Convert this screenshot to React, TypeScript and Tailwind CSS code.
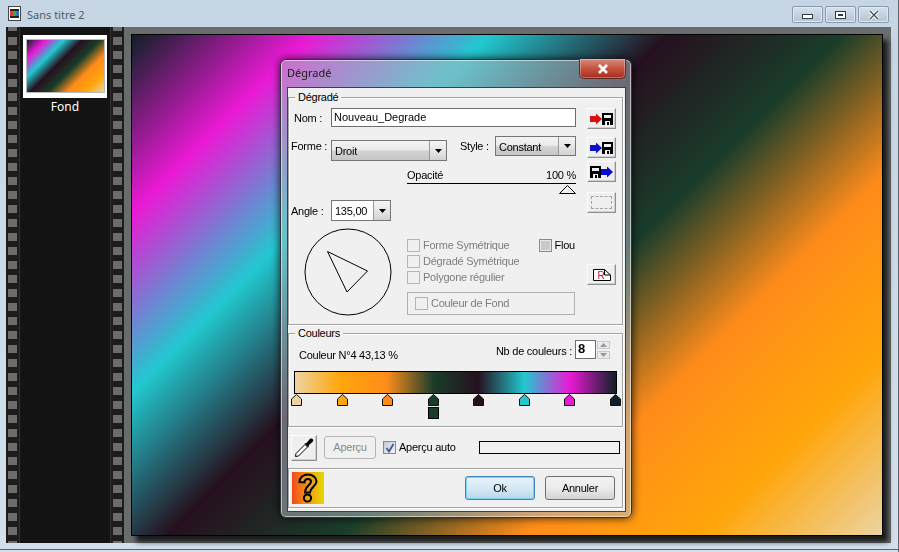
import React from "react";

const FONT = "font-['Liberation_Sans',Arial,sans-serif]";
const GRAD =
  "bg-[linear-gradient(135deg,#0f2026_0%,#ea19d5_14.29%,#22c8d0_28.57%,#26101f_42.87%,#1a3d2a_56.87%,#ff8c1a_71.43%,#ffa60a_85.71%,#ecd3a0_100%)]";
const BAR =
  "bg-[linear-gradient(90deg,#ecd3a0_0%,#ffa60a_14.29%,#ff8c1a_28.57%,#1a3d2a_43.13%,#26101f_57.13%,#22c8d0_71.43%,#ea19d5_85.71%,#0f2026_100%)]";

const RAISED =
  "border border-t-[#fdfdfd] border-l-[#fdfdfd] border-r-[#8f8f8f] border-b-[#8f8f8f] bg-[#efefef] shadow-[inset_-1px_-1px_0_#d0d0d0] flex items-center justify-center";

function Sprockets() {
  return (
    <div className="w-[13px] h-full overflow-hidden bg-[#1c1c1c] flex flex-col gap-[6px] pl-[2px]">
      {Array.from({ length: 38 }).map((_, i) => (
        <div key={i} className={`w-[9px] h-[8px] shrink-0 bg-[#6f6b6b] ${i === 0 ? "-mt-[4px]" : ""}`} />
      ))}
    </div>
  );
}

function WinBtn({ children, w }: { children: React.ReactNode; w: string }) {
  return (
    <div className={`${w} h-[17px] rounded-[2px] border border-[#8a9bac] bg-[linear-gradient(180deg,#d6e1ec_0%,#c5d3e0_50%,#b4c4d3_100%)] shadow-[inset_0_0_0_1px_#e0e8f0] flex items-center justify-center`}>
      {children}
    </div>
  );
}

function Floppy() {
  return (
    <>
      <rect x="0" y="0" width="11" height="12" fill="#000" />
      <rect x="2" y="2" width="7" height="3" fill="#f0f0f0" />
      <rect x="3" y="8" width="5" height="4" fill="#f0f0f0" />
      <rect x="5" y="9" width="2" height="3" fill="#000" />
    </>
  );
}

function Arrow({ color, dir }: { color: string; dir: "in" | "out" }) {
  return (
    <svg width="23" height="12" viewBox="0 0 23 12">
      {dir === "in" ? (
        <>
          <path d="M0 3H6V0.5L12 6L6 11.5V9H0Z" fill={color} />
          <g transform="translate(12 0)">
            <Floppy />
          </g>
        </>
      ) : (
        <>
          <Floppy />
          <path d="M11 3H17V0.5L23 6L17 11.5V9H11Z" fill={color} />
        </>
      )}
    </svg>
  );
}

function Select({ text, w, h = "h-[21px]", plain, cls = "" }: { text: string; w: string; h?: string; plain?: boolean; cls?: string }) {
  return (
    <div className={`${w} ${h} ${cls} border border-[#767676] flex ${plain ? "bg-white" : "bg-[linear-gradient(180deg,#f2f2f2_0%,#ebebeb_45%,#d2d2d2_55%,#c6c6c6_100%)]"}`}>
      <span className="flex-1 pl-[3px] leading-[20px] text-black whitespace-nowrap overflow-hidden">{text}</span>
      <div className="w-[17px] border-l border-[#9a9a9a] bg-[linear-gradient(180deg,#f4f4f4_0%,#e6e6e6_50%,#d2d2d2_100%)] flex items-center justify-center">
        <svg width="7" height="4" viewBox="0 0 7 4"><path d="M0 0H7L3.5 4Z" fill="#000" /></svg>
      </div>
    </div>
  );
}

function Check({ label, cls = "" }: { label?: string; cls?: string }) {
  return (
    <div className={`flex items-center h-[13px] ${cls}`}>
      <div className="w-[13px] h-[13px] border border-[#b5b5b5] bg-[#f0f0f0] shrink-0" />
      {label && <span className="ml-[3px] text-[#7d7d7d] whitespace-nowrap">{label}</span>}
    </div>
  );
}

function Marker({ color }: { color: string }) {
  return (
    <svg width="11" height="12" viewBox="0 0 11 12" className="block">
      <path d="M5.5 0.5L10.5 5V11.5H0.5V5Z" fill={color} stroke="#111" strokeWidth="1" />
    </svg>
  );
}

const GROUP = "border border-[#a3a3a3] shadow-[inset_1px_1px_0_#fff,1px_1px_0_#fff]";

export default function App() {
  const markers = ["#ecd3a0", "#ffa60a", "#ff8c1a", "#1a3d2a", "#26101f", "#22c8d0", "#ea19d5", "#0f2026"];
  return (
    <div className={`${FONT} relative w-[899px] h-[552px] overflow-hidden text-[11px] tracking-[-0.25px] flex flex-col bg-[linear-gradient(180deg,#c6d5e3_0%,#d3e0ec_100%)] border-r border-[#5a6470]`}>
      {/* title bar */}
      <div className="h-[27px] shrink-0 flex items-start pt-[6px] pl-[8px] pr-[9px]">
        <svg width="14" height="15" viewBox="0 0 14 15">
          <rect x="0.5" y="0.5" width="12" height="14" fill="#fff" stroke="#444" />
          <rect x="2" y="3" width="9" height="2" fill="#222" />
          <rect x="2" y="5" width="3" height="5" fill="#e23b2a" />
          <rect x="5" y="5" width="3" height="5" fill="#3aa84a" />
          <rect x="8" y="5" width="3" height="5" fill="#2f6fd0" />
          <rect x="2" y="10" width="9" height="2" fill="#222" />
        </svg>
        <span className="ml-[5px] font-['Noto_Sans',sans-serif] tracking-normal text-[11px] leading-[17px] text-[#505b66]">Sans titre 2</span>
        <div className="ml-auto flex gap-[2px]">
          <WinBtn w="w-[31px]">
            <div className="w-[11px] h-[5px] mt-[4px] border border-[#2d3a46] bg-white" />
          </WinBtn>
          <WinBtn w="w-[31px]">
            <div className="w-[11px] h-[8px] border border-[#2d3a46] bg-white flex items-center justify-center">
              <div className="w-[5px] h-[2px] border border-[#2d3a46]" />
            </div>
          </WinBtn>
          <WinBtn w="w-[31px]">
            <svg width="12" height="10" viewBox="0 0 12 10">
              <path d="M2 1L10 9M10 1L2 9" stroke="#fff" strokeWidth="3.4" />
              <path d="M2 1L10 9M10 1L2 9" stroke="#45525e" strokeWidth="1.4" />
            </svg>
          </WinBtn>
        </div>
      </div>

      {/* client */}
      <div className="relative ml-[6px] w-[885px] h-[516px] shrink-0 flex bg-[#696d6e]">
        <div className="w-[118px] h-full bg-[#131313] flex overflow-hidden shrink-0">
          <Sprockets />
          <div className="w-[92px] border-x border-[#333] flex flex-col items-center">
            <div className="mt-[8px] w-[84px] h-[63px] bg-white pt-[4px] px-[3px]">
              <div className={`w-[79px] h-[54px] border border-[#b9b9b9] ${GRAD}`} />
            </div>
            <span className="text-white font-['Noto_Sans',sans-serif] tracking-normal text-[12px] leading-[17px]">Fond</span>
          </div>
          <Sprockets />
        </div>
        <div className={`ml-[7px] mt-[7px] w-[752px] h-[502px] border border-black shadow-[5px_6px_5px_rgba(0,0,0,0.75)] ${GRAD}`} />

        {/* dialog */}
        <div className="absolute left-[274px] top-[32px] w-[352px] h-[459px] rounded-[6px] border border-[#2f3438] bg-[#b4c0c8]/50 backdrop-blur-[10px] shadow-[0_0_8px_rgba(0,0,0,0.8),inset_0_0_0_1px_rgba(255,255,255,0.55)] flex flex-col pl-[6px] pr-[5px] pb-[5px]">
          <div className="h-[27px] shrink-0 flex items-start">
            <span className="mt-[5px] font-['Noto_Sans',sans-serif] tracking-normal text-[11px] leading-[16px] text-[#1c1c1c]">Dégradé</span>
            <div className="ml-auto -mt-[1px] w-[47px] h-[20px] rounded-b-[5px] border border-[#5d2a24] border-t-0 bg-[linear-gradient(180deg,#d98b7f_0%,#c4543f_50%,#a92b1d_100%)] shadow-[inset_0_0_0_1px_rgba(255,255,255,0.3)] flex items-center justify-center">
              <svg width="12" height="10" viewBox="0 0 12 10">
                <path d="M2 1L10 9M10 1L2 9" stroke="#fff" strokeWidth="2.6" />
              </svg>
            </div>
          </div>

          <div className="flex-1 bg-[#f0f0f0] border border-[#3b4046] pt-[9px] flex flex-col">
            {/* Dégradé group */}
            <div className={`relative h-[228px] w-[335px] ${GROUP} shrink-0 flex`}>
              <span className="absolute left-[6px] -top-[8px] bg-[#f0f0f0] px-[3px] leading-[15px] text-black">Dégradé</span>
              <div className="w-[288px] shrink-0 flex flex-col">
                <div className="mt-[10px] h-[19px] flex items-center">
                  <span className="ml-[5px] mt-[2px] w-[37px] text-black whitespace-nowrap">Nom :</span>
                  <div className="w-[245px] h-[19px] border border-[#6d6d6d] bg-white pl-[2px] leading-[16px] tracking-normal text-black">Nouveau_Degrade</div>
                </div>
                <div className="mt-[9px] h-[25px] flex items-start">
                  <span className="ml-[2px] mt-[3px] w-[40px] leading-[15px] text-black whitespace-nowrap">Forme :</span>
                  <Select text="Droit" w="w-[116px]" cls="mt-[4px]" />
                  <span className="ml-[13px] mt-[3px] w-[35px] leading-[15px] text-black whitespace-nowrap">Style :</span>
                  <Select text="Constant" w="w-[81px]" h="h-[20px]" />
                </div>
                <div className="ml-[118px] w-[169px] mt-[7px] flex justify-between leading-[15px] text-black">
                  <span>Opacité</span>
                  <span>100 %</span>
                </div>
                <div className="ml-[118px] w-[169px] h-[1px] bg-black mb-[1px]" />
                <div className="ml-[270px]">
                  <svg width="17" height="9" viewBox="0 0 17 9" className="block"><path d="M8.5 0.5L16.5 8.5H0.5Z" fill="#f0f0f0" stroke="#000" /></svg>
                </div>
                <div className="mt-[6px] h-[21px] flex items-center">
                  <span className="ml-[2px] mt-[2px] w-[40px] text-black whitespace-nowrap">Angle :</span>
                  <Select text="135,00" w="w-[60px]" plain />
                </div>
                <div className="mt-[7px] flex items-start">
                  <svg width="88" height="88" viewBox="0 0 88 88" className="ml-[15px] shrink-0">
                    <circle cx="44" cy="44" r="43" fill="none" stroke="#000" />
                    <path d="M23.5 23.5L63.5 43L43 64Z" fill="none" stroke="#000" />
                  </svg>
                  <div className="ml-[15px] mt-[11px] w-[169px] flex flex-col">
                    <div className="flex justify-between">
                      <Check label="Forme Symétrique" />
                      <div className="flex items-center h-[13px] mr-[1px]">
                        <div className="w-[13px] h-[13px] border border-[#8a8a8a] bg-[#c9c9c9] shadow-[inset_0_0_0_1px_#e8e8e8]" />
                        <span className="ml-[3px] text-black">Flou</span>
                      </div>
                    </div>
                    <Check label="Dégradé Symétrique" cls="mt-[3px]" />
                    <Check label="Polygone régulier" cls="mt-[3px]" />
                    <div className="mt-[8px] w-[168px] h-[23px] border border-[#b0b0b0] flex items-center pl-[7px]">
                      <Check label="Couleur de Fond" />
                    </div>
                  </div>
                </div>
              </div>
              <div className="flex flex-col ml-[10px]">
                <div className={`w-[29px] h-[21px] mt-[10px] ${RAISED}`}><Arrow color="#d81010" dir="in" /></div>
                <div className={`w-[29px] h-[21px] mt-[8px] ${RAISED}`}><Arrow color="#1010c8" dir="in" /></div>
                <div className={`w-[29px] h-[21px] mt-[3px] ${RAISED}`}><Arrow color="#0a0ad0" dir="out" /></div>
                <div className={`w-[29px] h-[21px] mt-[10px] ${RAISED}`}>
                  <div className="w-[21px] h-[13px] border border-dashed border-[#a5a5a5]" />
                </div>
                <div className={`w-[29px] h-[21px] mt-[51px] ${RAISED}`}>
                  <svg width="18" height="13" viewBox="0 0 18 13">
                    <path d="M0.5 1.5H11.5L17.5 7V12.5H0.5Z" fill="#fff" stroke="#000" />
                    <path d="M11.5 1.5V7H17.5" fill="none" stroke="#000" />
                    <text x="4.5" y="10.5" fontSize="10" fill="#cc1133" fontFamily="Liberation Sans">R</text>
                  </svg>
                </div>
              </div>
            </div>

            {/* Couleurs group */}
            <div className={`relative mt-[8px] h-[94px] w-[335px] ${GROUP} shrink-0`}>
              <span className="absolute left-[6px] -top-[8px] bg-[#f0f0f0] px-[3px] leading-[15px] text-black">Couleurs</span>
              <div className="flex items-start h-[30px]">
                <span className="ml-[10px] mt-[14px] leading-[15px] text-black">Couleur N°4 43,13 %</span>
                <span className="ml-auto mt-[10px] leading-[15px] text-black">Nb de couleurs :</span>
                <div className="ml-[3px] mt-[6px] w-[21px] h-[19px] border border-[#6d6d6d] bg-white pl-[2px] font-bold text-[13px] leading-[16px] text-black">8</div>
                <div className="ml-[1px] mr-[12px] mt-[7px] w-[13px] flex flex-col gap-[2px]">
                  <div className="h-[8px] border border-[#c9c9c9] bg-[#eaeaea] flex items-center justify-center"><svg width="7" height="4" viewBox="0 0 7 4"><path d="M3.5 0L7 4H0Z" fill="#8b9bab" /></svg></div>
                  <div className="h-[8px] border border-[#c9c9c9] bg-[#eaeaea] flex items-center justify-center"><svg width="7" height="4" viewBox="0 0 7 4"><path d="M0 0H7L3.5 4Z" fill="#8b9bab" /></svg></div>
                </div>
              </div>
              <div className={`ml-[5px] mt-[7px] w-[323px] h-[23px] border border-black ${BAR}`} />
              <div className="ml-[2px] w-[330px] flex justify-between">
                {markers.map((c, i) => (
                  <div key={i} className="flex flex-col items-center">
                    <Marker color={c} />
                    {i === 3 && <div className="mt-[1px] w-[11px] h-[12px] border border-black bg-[#1a3d2a]" />}
                  </div>
                ))}
              </div>
            </div>

            {/* Row */}
            <div className="h-[41px] flex items-center shrink-0">
              <div className={`ml-[3px] w-[26px] h-[26px] ${RAISED}`}>
                <svg width="20" height="20" viewBox="0 0 20 20">
                  <path d="M1.5 18.5L2 15.5L11 6.5L13.5 9L4.5 18Z" fill="#fff" stroke="#000" />
                  <path d="M10.5 5.5L14.5 9.5L15 7L18.5 4C19.5 3 19.5 1.5 18.5 1C17.5 0 16 0.5 15.5 1.5L12.5 5Z" fill="#000" />
                </svg>
              </div>
              <div className="ml-[7px] w-[52px] h-[23px] rounded-[3px] border border-[#b5b5b5] bg-[#f0f0f0] flex items-center justify-center text-[#8a8a8a]">Aperçu</div>
              <div className="ml-[7px] w-[13px] h-[13px] border border-[#8a8a8a] bg-[linear-gradient(135deg,#c4c9d2,#f2f4f8)] flex items-center justify-center">
                <svg width="10" height="10" viewBox="0 0 10 10"><path d="M1.5 5L4 8.5L8.5 1" fill="none" stroke="#3a5a9c" strokeWidth="1.8" /></svg>
              </div>
              <span className="ml-[3px] w-[60px] whitespace-nowrap text-black">Aperçu auto</span>
              <div className="ml-[20px] w-[141px] h-[13px] border border-black bg-[#f0f0f0]" />
            </div>

            {/* Bottom group */}
            <div className={`h-[40px] w-[335px] ${GROUP} shrink-0 flex items-center`}>
              <div className="ml-[3px] w-[32px] h-[32px] bg-[linear-gradient(90deg,#ef4a1f_0%,#f39a10_50%,#e6d800_100%)] flex items-center justify-center">
                <svg width="22" height="30" viewBox="0 0 22 30">
                  <path d="M2.5 9C2.5 4.5 6.5 1.5 11 1.5S19.5 4.5 19.5 8.5C19.5 13 13.5 14 13 19.5H8C8 12.5 14 12 14 8.5C14 7 12.8 6 11 6S7.5 7 7.5 9.5Z" fill="#e9a020" stroke="#000" strokeWidth="2" />
                  <circle cx="10.5" cy="25" r="3.6" fill="#e9a020" stroke="#000" strokeWidth="2" />
                </svg>
              </div>
              <div className="ml-auto w-[70px] h-[24px] rounded-[3px] border border-[#3d88b8] bg-[linear-gradient(180deg,#e8f3fa_0%,#d6e9f5_50%,#b8d6e8_100%)] shadow-[inset_0_0_0_1px_#7fd0ee] flex items-center justify-center text-black">Ok</div>
              <div className="ml-[10px] mr-[7px] w-[70px] h-[24px] rounded-[3px] border border-[#707070] bg-[linear-gradient(180deg,#f2f2f2_0%,#ebebeb_50%,#d4d4d4_100%)] flex items-center justify-center text-black">Annuler</div>
            </div>
          </div>
        </div>
      </div>
      <div className="flex-1" />
      <div className="h-[1px] bg-[#5a6470]" />
      <div className="h-[2px]" />
    </div>
  );
}
